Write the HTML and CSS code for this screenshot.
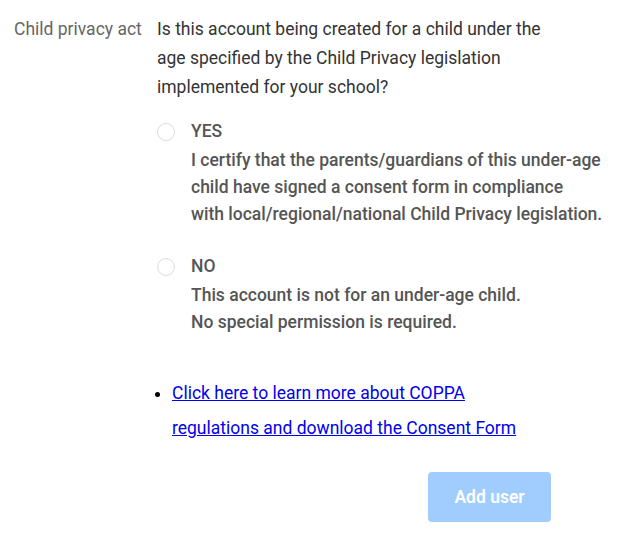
FILE: index.html
```html
<!DOCTYPE html>
<html>
<head>
<meta charset="utf-8">
<link rel="stylesheet" href="styles.css">
</head>
<body>
<div class="field">
  <div class="label">Child privacy act</div>
  <div class="content">
    <p class="question">Is this account being created for a child under the<br>age specified by the Child Privacy legislation<br>implemented for your school?</p>
    <div class="options">
      <label class="option">
        <span class="radio"></span>
        <span class="option-text">
          <span class="option-title">YES</span>
          <span class="option-desc">I certify that the parents/guardians of this under-age<br>child have signed a consent form in compliance<br>with local/regional/national Child Privacy legislation.</span>
        </span>
      </label>
      <label class="option">
        <span class="radio"></span>
        <span class="option-text">
          <span class="option-title">NO</span>
          <span class="option-desc">This account is not for an under-age child.<br>No special permission is required.</span>
        </span>
      </label>
    </div>
    <ul class="links">
      <li><a href="#">Click here to learn more about COPPA<br>regulations and download the Consent Form</a></li>
    </ul>
    <div class="actions">
      <button class="btn" type="button">Add user</button>
    </div>
  </div>
</div>
</body>
</html>
```
FILE: styles.css
```css
html, body {
  margin: 0;
  padding: 0;
  background: #ffffff;
}
body {
  font-family: Roboto, "Liberation Sans", sans-serif;
  font-size: 17.5px;
}
.field {
  display: flex;
  padding: 15px 0 0 14px;
}
.label {
  width: 143px;
  flex: none;
  color: #666666;
  line-height: 29px;
}
.content {
  display: flex;
  flex-direction: column;
}
.question {
  margin: 0;
  color: #333333;
  line-height: 29px;
  white-space: nowrap;
}
.options {
  display: flex;
  flex-direction: column;
  gap: 25px;
  margin-top: 16px;
}
.option {
  display: flex;
  gap: 16px;
  align-items: flex-start;
}
.radio {
  flex: none;
  width: 16px;
  height: 16px;
  border: 1px solid #dcdce0;
  border-radius: 50%;
  margin-top: 5px;
  background: #fff;
}
.option-text {
  display: flex;
  flex-direction: column;
  color: #555555;
  font-weight: 500;
  line-height: 27px;
  white-space: nowrap;
}
.option-desc {
  margin-top: 2px;
}
.links {
  margin: 40px 0 0 0;
  padding-left: 15px;
  line-height: 35px;
}
.links a {
  color: #0000ee;
}
.actions {
  padding-left: 271px;
  margin-top: 26px;
}
.btn {
  width: 123px;
  height: 50px;
  border: none;
  border-radius: 4px;
  background: #a0cdfd;
  color: #ffffff;
  font-family: Roboto, "Liberation Sans", sans-serif;
  font-size: 17.5px;
  font-weight: 600;
}
```
